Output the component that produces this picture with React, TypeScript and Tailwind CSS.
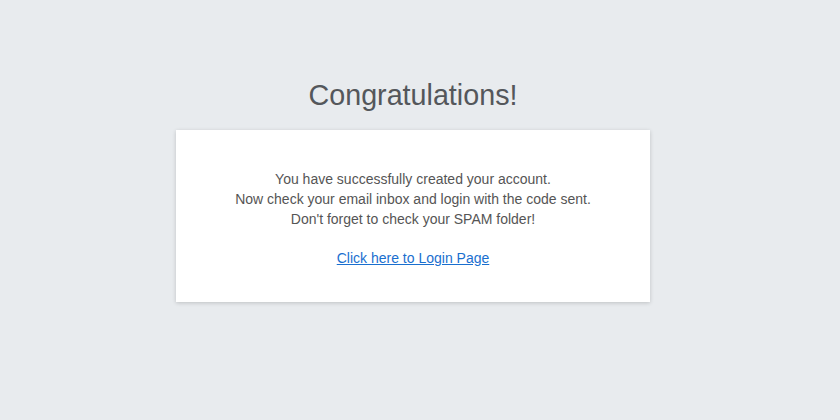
import React from 'react';

const App: React.FC = () => {
  return (
    <main className="min-h-screen w-full bg-[#e8ebee] pr-[14px] font-['Liberation_Sans',Arial,sans-serif]">
      <div className="flex flex-col items-center pt-[76px]">
        {/* Título */}
        <h1 className="text-[28.7px] leading-[38px] text-[#54575b]">Congratulations!</h1>

        {/* Cartão */}
        <section className="mt-[16px] flex w-[474px] flex-col items-center bg-white pt-[39px] pb-[34px] text-center text-[14px] leading-[20px] text-[#555555] shadow-[0_1px_4px_rgba(0,0,0,0.18)]">
          <p>You have successfully created your account.</p>
          <p>Now check your email inbox and login with the code sent.</p>
          <p>Don't forget to check your SPAM folder!</p>
          <a href="#" className="mt-[19px] text-[#1a6fcf] underline">
            Click here to Login Page
          </a>
        </section>
      </div>
    </main>
  );
};

export default App;
